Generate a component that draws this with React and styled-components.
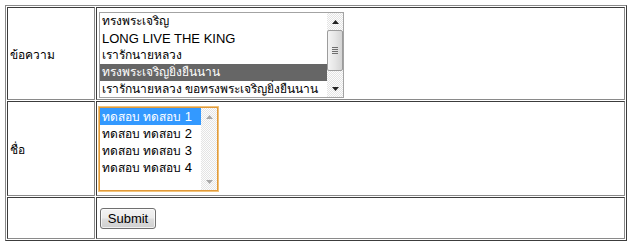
import React from 'react';
import styled, { createGlobalStyle } from 'styled-components';

const Global = createGlobalStyle`
  html, body { margin: 0; padding: 0; background: #fff; }
  body {
    font-family: "Liberation Sans", Tahoma, sans-serif;
    font-size: 12px;
    color: #000;
  }
`;

const Page = styled.div`
  padding: 5px;
`;

const FormTable = styled.div`
  box-sizing: border-box;
  width: 622px;
  height: 236px;
  display: grid;
  grid-template-columns: 88px 529px;
  grid-template-rows: 93px 95px 42px;
  gap: 1px;
  padding: 1px;
  border: 1px solid;
  border-color: #8a8a8a #3c3c3c #3c3c3c #8a8a8a;
`;

const Cell = styled.div`
  box-sizing: border-box;
  border: 1px solid;
  border-color: #3c3c3c #8a8a8a #8a8a8a #3c3c3c;
  display: flex;
  align-items: ${(p) => p.$align || 'center'};
  padding: ${(p) => p.$pad || '0 0 0 2px'};
`;

const Label = styled.span`
  font-size: 12px;
  line-height: 16px;
  padding-top: 2px;
`;

const ListBox = styled.div`
  box-sizing: border-box;
  width: ${(p) => p.$w}px;
  height: ${(p) => p.$h}px;
  display: flex;
  background: #fff;
  border: 1px solid ${(p) => (p.$focus ? '#e09a3a' : '#a3a3a3')};
  box-shadow: ${(p) => (p.$focus ? '0 0 0 1px #f2c27a' : 'none')};
`;

const Options = styled.div`
  flex: 1;
  min-width: 0;
  overflow: hidden;
`;

const Option = styled.div`
  height: 17px;
  line-height: 17px;
  padding-left: 2px;
  white-space: nowrap;
  font-size: ${(p) => (p.$latin ? 13 : 12)}px;
  background: ${(p) =>
    p.$sel === 'active' ? '#3399ff' : p.$sel === 'inactive' ? '#666666' : 'transparent'};
  color: ${(p) => (p.$sel ? '#fff' : '#000')};
`;

const Num = styled.span`
  font-size: 13px;
`;

const ScrollBar = styled.div`
  width: 16px;
  flex: none;
  display: flex;
  flex-direction: column;
  background: repeating-conic-gradient(#e4e4e4 0 25%, #fdfdfd 0 50%) 0 0 / 2px 2px;
`;

const ArrowBox = styled.div`
  height: 17px;
  flex: none;
  display: flex;
  align-items: center;
  justify-content: center;
`;

const Thumb = styled.div`
  box-sizing: border-box;
  height: ${(p) => p.$h}px;
  border: 1px solid #9c9c9c;
  border-radius: 2px;
  background: linear-gradient(90deg, #f4f4f4 0%, #e6e6e6 50%, #d4d4d4 100%);
  display: flex;
  align-items: center;
  justify-content: center;
`;

const Spacer = styled.div`
  flex: 1;
`;

const Button = styled.button`
  box-sizing: border-box;
  width: 56px;
  height: 21px;
  padding: 0;
  margin: 0;
  font-family: "Liberation Sans", Arial, sans-serif;
  font-size: 13px;
  color: #000;
  border: 1px solid #707070;
  border-radius: 3px;
  background: linear-gradient(#f3f3f3 0%, #ebebeb 48%, #dddddd 52%, #cfcfcf 100%);
  box-shadow: inset 0 0 0 1px rgba(255, 255, 255, 0.7);
`;

const Arrow = ({ down, color }) => (
  <svg width="7" height="4" viewBox="0 0 7 4">
    <path d={down ? 'M0 0H7L3.5 4Z' : 'M0 4H7L3.5 0Z'} fill={color} />
  </svg>
);

const Grip = () => (
  <svg width="6" height="8" viewBox="0 0 6 8">
    {[0, 2, 4, 6].map((y) => (
      <rect key={y} x="0" y={y} width="6" height="1" fill="#6e6e6e" />
    ))}
  </svg>
);

const messages = [
  { text: 'ทรงพระเจริญ' },
  { text: 'LONG LIVE THE KING', latin: true },
  { text: 'เรารักนายหลวง' },
  { text: 'ทรงพระเจริญยิ่งยืนนาน' },
  { text: 'เรารักนายหลวง ขอทรงพระเจริญยิ่งยืนนาน' },
];

const names = ['1', '2', '3', '4'];

export default function App() {
  return (
    <>
      <Global />
      <Page>
        <FormTable>
          <Cell>
            <Label>ข้อความ</Label>
          </Cell>
          <Cell $align="flex-start" $pad="4px 0 0 2px">
            <ListBox $w={245} $h={86}>
              <Options>
                {messages.map((m, i) => (
                  <Option key={m.text} $latin={m.latin} $sel={i === 3 ? 'inactive' : undefined}>
                    {m.text}
                  </Option>
                ))}
              </Options>
              <ScrollBar>
                <ArrowBox>
                  <Arrow color="#222" />
                </ArrowBox>
                <Thumb $h={41}>
                  <Grip />
                </Thumb>
                <Spacer />
                <ArrowBox>
                  <Arrow down color="#222" />
                </ArrowBox>
              </ScrollBar>
            </ListBox>
          </Cell>

          <Cell>
            <Label>ชื่อ</Label>
          </Cell>
          <Cell $align="flex-start" $pad="5px 0 0 2px">
            <ListBox $w={119} $h={84} $focus>
              <Options>
                {names.map((n, i) => (
                  <Option key={n} $sel={i === 0 ? 'active' : undefined}>
                    ทดสอบ ทดสอบ <Num>{n}</Num>
                  </Option>
                ))}
              </Options>
              <ScrollBar>
                <ArrowBox>
                  <Arrow color="#a8a8a8" />
                </ArrowBox>
                <Spacer />
                <ArrowBox>
                  <Arrow down color="#a8a8a8" />
                </ArrowBox>
              </ScrollBar>
            </ListBox>
          </Cell>

          <Cell />
          <Cell $pad="0 0 0 3px">
            <Button type="button">Submit</Button>
          </Cell>
        </FormTable>
      </Page>
    </>
  );
}
